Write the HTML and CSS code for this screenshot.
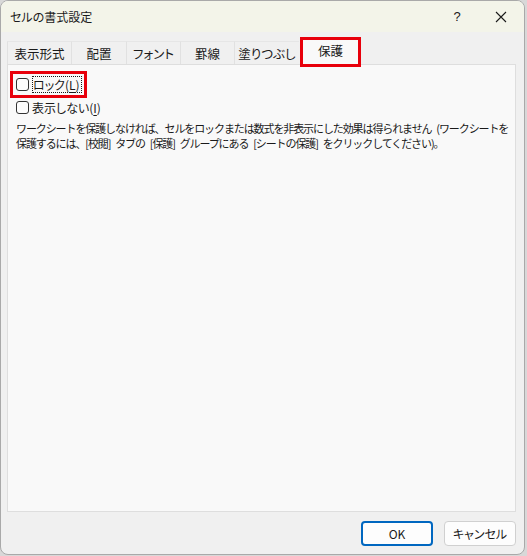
FILE: index.html
```html
<!DOCTYPE html>
<html>
<head>
    <title>セルの書式設定</title>
    <link rel="stylesheet" href="styles.css">
</head>
<body>
    <div class="dialog">
        <div class="title-bar">
            <span class="title">セルの書式設定</span>
            <span class="title-btn help">?</span>
            <span class="title-btn close">
                <svg width="12" height="12" viewBox="0 0 12 12"><path d="M1 1 L11 11 M11 1 L1 11" stroke="#1a1a1a" stroke-width="1.1" fill="none"/></svg>
            </span>
        </div>
        <div class="tabs">
            <div class="tab">表示形式</div>
            <div class="tab">配置</div>
            <div class="tab">フォント</div>
            <div class="tab">罫線</div>
            <div class="tab">塗りつぶし</div>
            <div class="tab active">保護</div>
        </div>
        <div class="panel">
            <div class="check-row highlight">
                <span class="checkbox"></span>
                <span class="label focused">ロック(<u>L</u>)</span>
            </div>
            <div class="check-row">
                <span class="checkbox"></span>
                <span class="label">表示しない(<u>I</u>)</span>
            </div>
            <p class="note">ワークシートを保護しなければ、セルをロックまたは数式を非表示にした効果は得られません (ワークシートを<br>保護するには、[校閲] タブの [保護] グループにある [シートの保護] をクリックしてください)。</p>
        </div>
        <div class="footer">
            <button class="btn primary">OK</button>
            <button class="btn">キャンセル</button>
        </div>
    </div>
</body>
</html>
```

FILE: styles.css
```css
* {
    margin: 0;
    padding: 0;
    box-sizing: border-box;
}

body {
    width: 527px;
    height: 556px;
    background: #d8d8d8;
    font-family: "Noto Sans CJK JP", "Noto Sans", sans-serif;
    font-feature-settings: "palt";
    color: #1a1a1a;
    overflow: hidden;
}

.dialog {
    width: 525px;
    height: 555px;
    background: #f0f0f0;
    border: 1px solid #a9a9a9;
    border-radius: 8px;
    display: flex;
    flex-direction: column;
    overflow: hidden;
}

.title-bar {
    height: 31px;
    background: #f3f4e9;
    display: flex;
    align-items: center;
    padding-left: 9px;
    font-size: 12px;
}

.title {
    flex: 1;
}

.title-btn {
    width: 46px;
    display: flex;
    justify-content: center;
    align-items: center;
}

.help {
    font-family: "Liberation Sans", sans-serif;
    font-size: 13px;
    margin-right: -4px;
}

.close {
    margin-left: 2px;
}

.tabs {
    display: flex;
    align-items: flex-end;
    height: 32px;
    padding-left: 6px;
    position: relative;
    z-index: 1;
}

.tab {
    height: 23px;
    display: flex;
    align-items: center;
    justify-content: center;
    white-space: nowrap;
    font-size: 12.5px;
    border-left: 1px solid #e1e1e1;
    border-top: 1px solid #e6e6e6;
    background: #f0f0f0;
}

.tab:nth-child(1) { width: 64px; }
.tab:nth-child(2) { width: 55px; }
.tab:nth-child(3) { width: 54px; }
.tab:nth-child(4) { width: 54px; }
.tab:nth-child(5) { width: 65px; }

.tab.active {
    width: 61px;
    height: 30px;
    margin-bottom: -3px;
    margin-left: 1px;
    background: #f9f9f9;
    border: 3px solid #e8000b;
    padding-bottom: 3px;
}

.panel {
    margin: 0 8px 0 6px;
    height: 448px;
    background: #f9f9f9;
    border: 1px solid #dedede;
    padding: 6px 0 0 2px;
}

.check-row {
    display: flex;
    align-items: center;
    height: 18px;
    font-size: 12px;
    padding-left: 6px;
    width: fit-content;
}

.check-row.highlight {
    height: 27px;
    border: 3px solid #e8000b;
    padding: 0 2px 0 3px;
}

.checkbox {
    width: 13px;
    height: 13px;
    border: 1px solid #333;
    border-radius: 3px;
    background: #fdfdfd;
    margin-right: 3px;
    flex: none;
}

.label {
    white-space: nowrap;
    line-height: 15px;
}

.label u {
    text-underline-offset: 2px;
}

.label.focused {
    border: 1px dotted #1a1a1a;
    padding: 0 1px 0 0;
    line-height: 15px;
}

.note {
    font-size: 11px;
    font-feature-settings: normal;
    letter-spacing: -1.1px;
    word-spacing: 3.5px;
    line-height: 15px;
    padding: 5px 0 0 6px;
    white-space: nowrap;
}

.footer {
    flex: 1;
    display: flex;
    justify-content: flex-end;
    align-items: center;
    gap: 11px;
    padding-right: 8px;
}

.btn {
    width: 72px;
    height: 25px;
    background: #fdfdfd;
    border: 1px solid #d0d0d0;
    border-radius: 4px;
    font-family: "Noto Sans CJK JP", "Noto Sans", sans-serif;
    font-feature-settings: "palt";
    font-size: 12px;
    color: #1a1a1a;
}

.btn.primary {
    border: 2px solid #0067c0;
}
```
